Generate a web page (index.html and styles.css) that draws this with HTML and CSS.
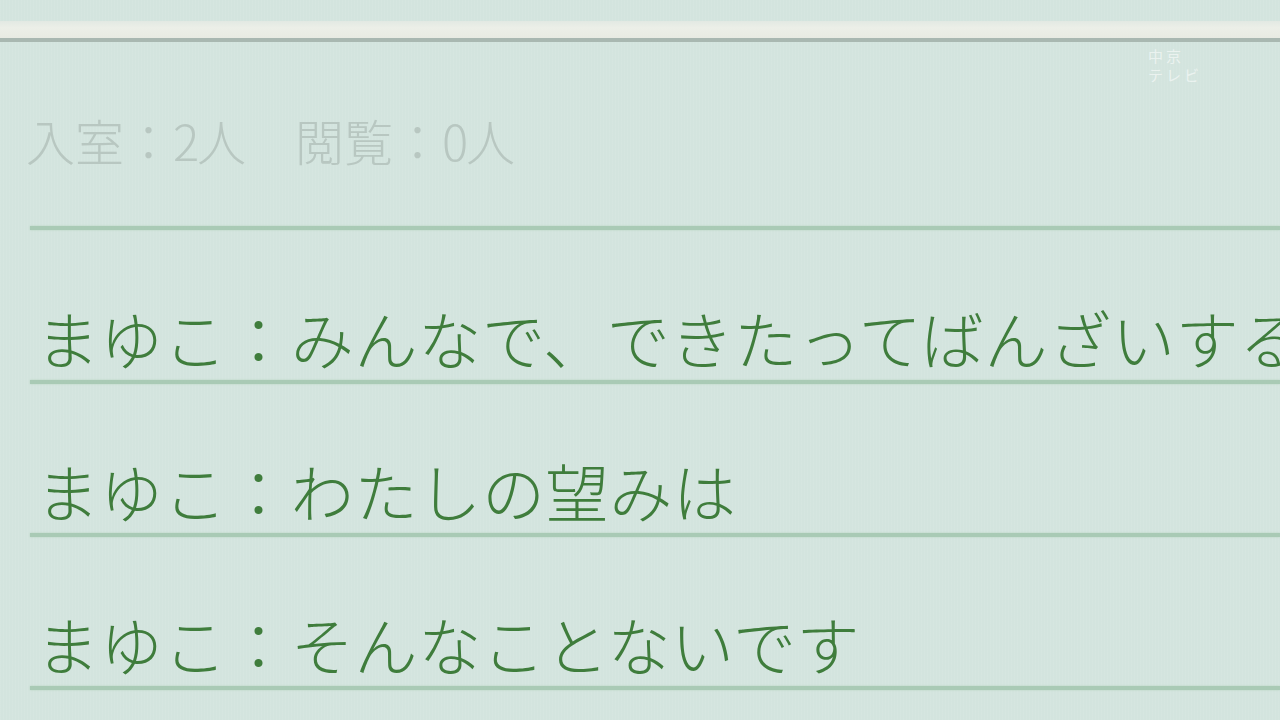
FILE: index.html
```html
<!DOCTYPE html>
<html lang="ja">
<head>
<meta charset="utf-8">
<title>チャット</title>
<link rel="stylesheet" href="styles.css">
</head>
<body>
<div class="screen">
  <div class="topbar"></div>
  <div class="watermark"><span>中京</span><span>テレビ</span></div>
  <main class="chat">
    <div class="count"><span>入室：</span><span class="num">2</span><span>人　閲覧：</span><span class="num">0</span><span>人</span></div>
    <div class="divider"></div>
    <ul class="log">
      <li class="msg"><p class="line">まゆこ：みんなで、できたってばんざいする</p><div class="rule"></div></li>
      <li class="msg"><p class="line">まゆこ：わたしの望みは</p><div class="rule"></div></li>
      <li class="msg"><p class="line">まゆこ：そんなことないです</p><div class="rule"></div></li>
    </ul>
  </main>
</div>
</body>
</html>
```
FILE: styles.css
```css
html, body {
  margin: 0;
  padding: 0;
}
body {
  width: 1280px;
  height: 720px;
  overflow: hidden;
  background: #d3e4de;
  font-family: "Noto Sans CJK JP", "Noto Sans", sans-serif;
}
.screen {
  position: relative;
  width: 1280px;
  height: 720px;
  background-color: #d3e4de;
  background-image: repeating-linear-gradient(90deg, rgba(255,255,255,0.06) 0 1px, rgba(0,0,0,0) 1px 3px);
  overflow: hidden;
}
.topbar {
  margin-top: 21px;
  height: 17px;
  background: linear-gradient(180deg, #e2e9e3 0%, #ecefe8 40%, #e8ebe3 100%);
  border-bottom: 4px solid #a9b8b1;
}
.watermark {
  position: absolute;
  left: 1148px;
  top: 46px;
  display: flex;
  flex-direction: column;
  font-size: 15px;
  line-height: 19px;
  letter-spacing: 3px;
  color: rgba(255,255,255,0.55);
}
.chat {
  display: flex;
  flex-direction: column;
}
.count {
  margin: 72px 0 0 26px;
  font-size: 49px;
  line-height: 52px;
  font-weight: 300;
  color: #b8c7c1;
  white-space: nowrap;
}
.count .num {
  display: inline-block;
  width: 24px;
  text-align: center;
}
.divider {
  margin: 60px 0 0 30px;
  height: 4px;
  background: #a9cab5;
  box-shadow: 0 0 2px #b2d0bc;
}
.log {
  list-style: none;
  margin: 71px 0 0 0;
  padding: 0;
  display: flex;
  flex-direction: column;
  gap: 70px;
}
.msg {
  display: flex;
  flex-direction: column;
}
.line {
  margin: 0 0 0 36px;
  font-size: 63px;
  line-height: 72px;
  letter-spacing: 0.7px;
  font-weight: 300;
  color: #3f7d3c;
  white-space: nowrap;
}
.rule {
  margin: 7px 0 0 30px;
  height: 4px;
  background: #a9cab5;
  box-shadow: 0 0 2px #b2d0bc;
}
```
